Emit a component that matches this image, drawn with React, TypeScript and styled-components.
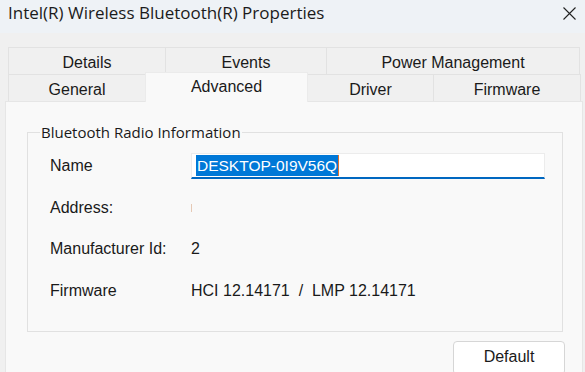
import React from 'react';
import styled, { createGlobalStyle } from 'styled-components';

const GlobalStyle = createGlobalStyle`
  html, body {
    margin: 0;
    padding: 0;
    width: 585px;
    height: 372px;
    overflow: hidden;
    background: #f0f0f0;
  }
  * { box-sizing: border-box; }
`;

const Window = styled.div`
  width: 585px;
  height: 372px;
  display: flex;
  flex-direction: column;
  background: #f0f0f0;
  overflow: hidden;
  font-family: 'Liberation Sans', Arial, sans-serif;
  color: #1a1a1a;
`;

const TitleBar = styled.div`
  height: 33px;
  flex: none;
  display: flex;
  align-items: center;
  justify-content: space-between;
  padding: 0 9px 9px 8px;
  background: #eef2f6;
`;

const Title = styled.span`
  font-family: 'Open Sans', 'Noto Sans', sans-serif;
  font-size: 17px;
  color: #1b1b1b;
`;

const CloseIcon = styled.svg`
  width: 13px;
  height: 13px;
  margin-top: 2px;
`;

const Body = styled.div`
  flex: 1;
  display: flex;
  flex-direction: column;
  padding: 14px 2px 0 5px;
`;

const TabRow = styled.div`
  display: flex;
  margin-left: 3px;
  width: 572px;
  height: 27px;
`;

const Tab = styled.div<{ $w: number; $active?: boolean }>`
  width: ${({ $w }) => $w}px;
  flex: none;
  display: flex;
  align-items: center;
  justify-content: center;
  padding-top: 3px;
  font-size: 16px;
  color: #1a1a1a;
  background: ${({ $active }) => ($active ? '#f9f9f9' : '#f0f0f0')};
  border: 1px solid #e2e2e2;
  border-bottom: none;
  margin-left: -1px;
  &:first-child { margin-left: 0; }
  ${({ $active }) =>
    $active &&
    `
    position: relative;
    margin-top: -2px;
    height: 30px;
    padding-top: 0;
    padding-bottom: 2px;
    border-color: #ebebeb;
    z-index: 1;
  `}
`;

const Panel = styled.div`
  flex: 1;
  background: #f9f9f9;
  border: 1px solid #e6e6e6;
  border-bottom: none;
  padding: 20px 19px 0 21px;
  display: flex;
  flex-direction: column;
`;

const Group = styled.fieldset`
  margin: 0;
  border: 1px solid #e1e1e1;
  padding: 3px 0 0 22px;
  height: 210px;
  min-width: 0;
`;

const Legend = styled.legend`
  font-family: 'Open Sans', 'Noto Sans', sans-serif;
  font-size: 15px;
  color: #1a1a1a;
  padding: 0 1px;
  margin-left: -10px;
`;

const Row = styled.div`
  display: flex;
  align-items: center;
  height: 41.7px;
`;

const Label = styled.div`
  width: 141px;
  flex: none;
  font-size: 16px;
  color: #1a1a1a;
`;

const Value = styled.div`
  font-size: 16px;
  color: #1a1a1a;
  white-space: pre;
`;

const NameInput = styled.div`
  width: 354px;
  height: 26px;
  background: #ffffff;
  border: 1px solid #ececec;
  border-bottom: 2px solid #0067c0;
  display: flex;
  align-items: center;
  padding-left: 4px;
`;

const Selection = styled.span`
  background: #0078d7;
  color: #ffffff;
  font-size: 15.5px;
  line-height: 21px;
  padding: 0 1px;
  border-right: 1px solid #e0722f;
`;

const Caret = styled.span`
  display: inline-block;
  width: 1px;
  height: 8px;
  background: #e6c9b5;
`;

const Footer = styled.div`
  display: flex;
  justify-content: flex-end;
  padding-top: 9px;
`;

const Button = styled.button`
  width: 112px;
  height: 34px;
  margin-right: -2px;
  background: #ffffff;
  border: 1px solid #d6d6d6;
  border-radius: 4px;
  font-family: 'Liberation Sans', Arial, sans-serif;
  font-size: 16px;
  color: #1a1a1a;
  padding: 0 0 2px 0;
`;

export default function App() {
  return (
    <Window>
      <GlobalStyle />
      <TitleBar>
        <Title>Intel(R) Wireless Bluetooth(R) Properties</Title>
        <CloseIcon viewBox="0 0 13 13">
          <path d="M0.5 0.5 L12.5 12.5 M12.5 0.5 L0.5 12.5" stroke="#222" strokeWidth="1.1" fill="none" />
        </CloseIcon>
      </TitleBar>
      <Body>
        <TabRow>
          <Tab $w={158}>Details</Tab>
          <Tab $w={162}>Events</Tab>
          <Tab $w={254}>Power Management</Tab>
        </TabRow>
        <TabRow>
          <Tab $w={138}>General</Tab>
          <Tab $w={163} $active>Advanced</Tab>
          <Tab $w={127}>Driver</Tab>
          <Tab $w={148}>Firmware</Tab>
        </TabRow>
        <Panel>
          <Group>
            <Legend>Bluetooth Radio Information</Legend>
            <Row>
              <Label>Name</Label>
              <NameInput>
                <Selection>DESKTOP-0I9V56Q</Selection>
              </NameInput>
            </Row>
            <Row>
              <Label>Address:</Label>
              <Caret />
            </Row>
            <Row>
              <Label>Manufacturer Id:</Label>
              <Value>2</Value>
            </Row>
            <Row>
              <Label>Firmware</Label>
              <Value>HCI 12.14171  /  LMP 12.14171</Value>
            </Row>
          </Group>
          <Footer>
            <Button>Default</Button>
          </Footer>
        </Panel>
      </Body>
    </Window>
  );
}
